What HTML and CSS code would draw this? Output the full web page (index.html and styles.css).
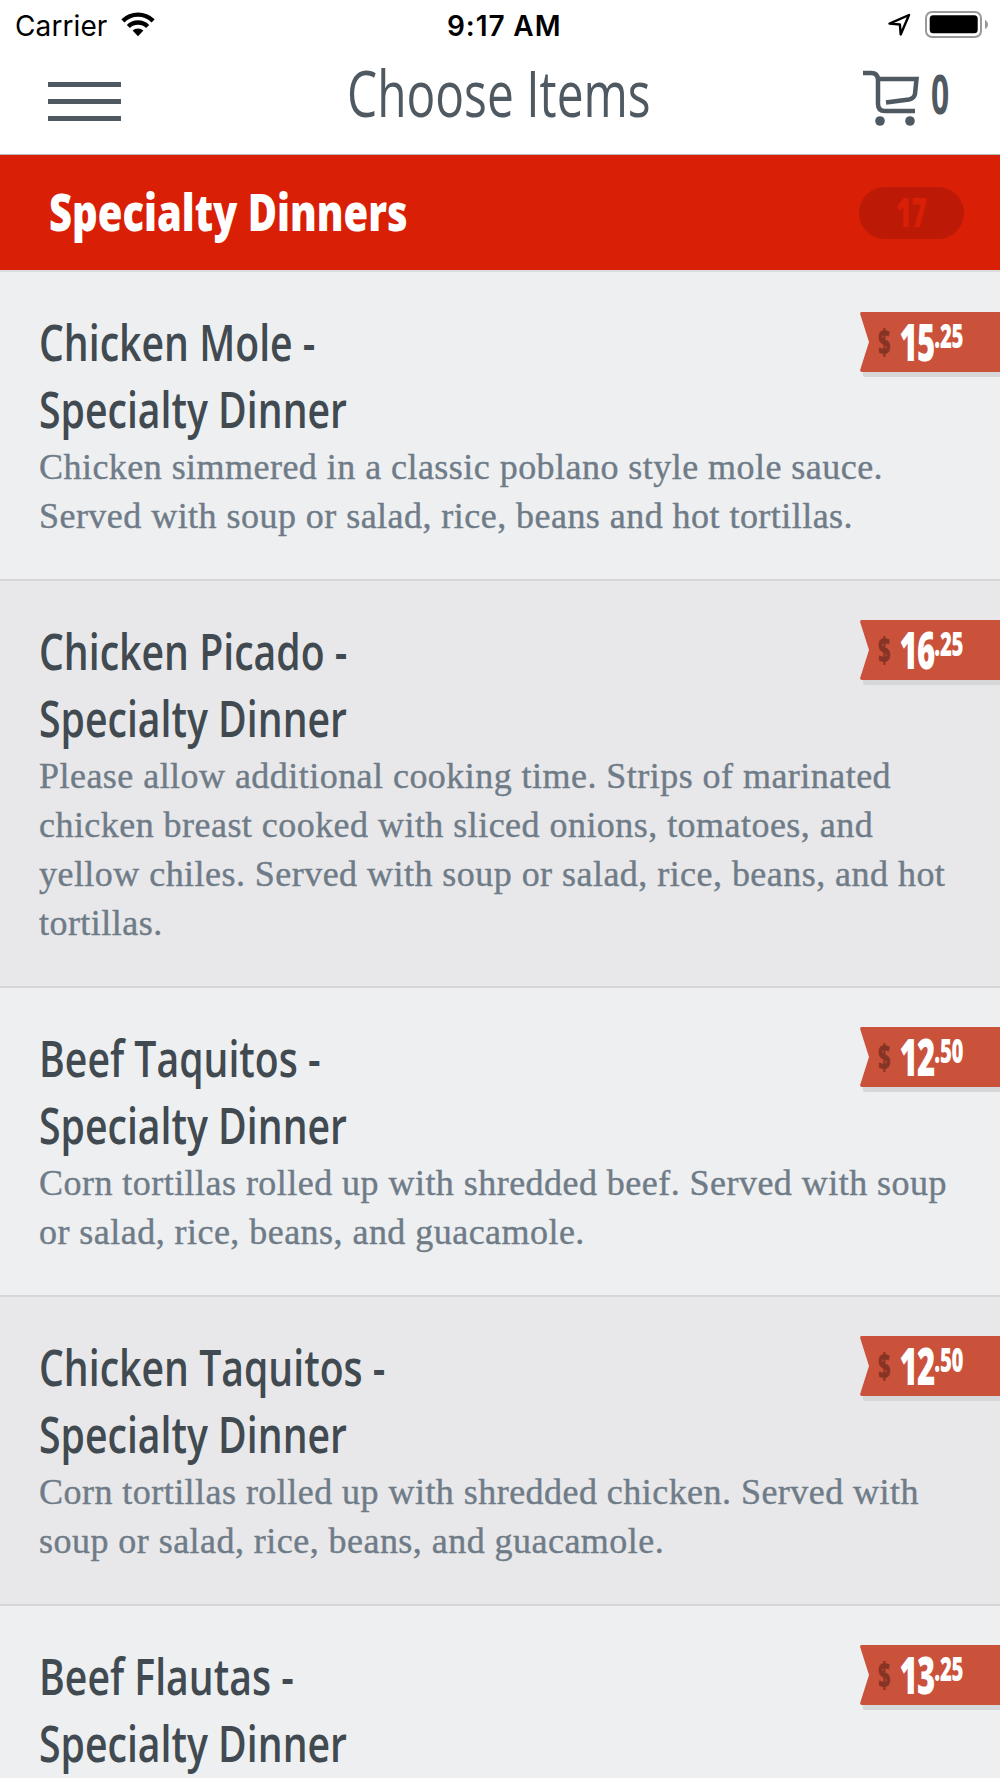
FILE: index.html
```html
<!DOCTYPE html>
<html lang="en">
<head>
    <meta charset="UTF-8">
    <meta name="viewport" content="width=device-width, initial-scale=1.0">
    <title>Choose Items</title>
    <link rel="stylesheet" href="styles.css">
</head>
<body>
    <div class="status-bar">
        <div class="status-left">
            <span class="carrier">Carrier</span>
            <svg class="wifi" width="34" height="25" viewBox="0 0 34 25">
                <path d="M0.3 7.3A24 24 0 0 1 33.7 7.3L30.6 10.4A19.5 19.5 0 0 0 3.4 10.4Z"/>
                <path d="M5.8 12.9A16 16 0 0 1 28.2 12.9L25.1 16A11.6 11.6 0 0 0 8.9 16Z"/>
                <path d="M11.6 18.6A7.8 7.8 0 0 1 22.4 18.6L17 24.3Z"/>
            </svg>
        </div>
        <span class="time">9:17 AM</span>
        <div class="status-right">
            <svg width="23" height="25" viewBox="0 0 23 25">
                <path d="M1.500 12.600L21 4L12.700 23.500L11.900 13.500Z" fill="none" stroke="#000" stroke-width="2.400" stroke-linejoin="round"/>
            </svg>
            <svg width="64" height="28" viewBox="0 0 64 28">
                <rect x="1" y="1" width="55" height="25" rx="6" fill="none" stroke="#999" stroke-width="2"/>
                <rect x="4.700" y="4.300" width="48" height="18" rx="3.500"/>
                <path d="M60 9Q63 10.500 63 13.500Q63 16.500 60 18Z" fill="#999"/>
            </svg>
        </div>
    </div>

    <header class="header">
        <div class="menu-icon"><i></i><i></i><i></i></div>
        <h1><span class="narrow">Choose Items</span></h1>
        <div class="cart">
            <svg width="57" height="56" viewBox="0 0 57 56">
                <g fill="none" stroke="#4f5961" stroke-width="4.500">
                    <path d="M0 3H8Q15 3 15 10V34Q15 41 22 41H52"/>
                    <path d="M15 9H53.500L52 24Q51 28.500 46 29.500L23 32.500"/>
                </g>
                <circle cx="17" cy="51" r="4.800" fill="#4f5961"/>
                <circle cx="47" cy="51" r="4.800" fill="#4f5961"/>
            </svg>
            <span class="cart-count narrow">0</span>
        </div>
    </header>

    <div class="category">
        <h2><span class="narrow">Specialty Dinners</span></h2>
        <div class="badge"><span class="narrow">17</span></div>
    </div>

    <ul class="items">
        <li class="item">
            <h3><span class="narrow">Chicken Mole -</span><br><span class="narrow">Specialty Dinner</span></h3>
            <p>Chicken simmered in a classic poblano style mole sauce.<br>Served with soup or salad, rice, beans and hot tortillas.</p>
            <div class="price">
                <svg class="tag" width="140" height="66" viewBox="0 0 140 66"><path class="tag-shadow" d="M3 60H140V65H5Q2 65 3 60Z"/><path class="tag-body" d="M2 0H140V60H2Q-.5 60 .3 57.500L9 30L.3 2.500Q-.5 0 2 0Z"/></svg>
                <span class="amount"><small>$</small><b>15</b><sup>.25</sup></span>
            </div>
        </li>
        <li class="item">
            <h3><span class="narrow">Chicken Picado -</span><br><span class="narrow">Specialty Dinner</span></h3>
            <p>Please allow additional cooking time. Strips of marinated<br>chicken breast cooked with sliced onions, tomatoes, and<br>yellow chiles. Served with soup or salad, rice, beans, and hot<br>tortillas.</p>
            <div class="price">
                <svg class="tag" width="140" height="66" viewBox="0 0 140 66"><path class="tag-shadow" d="M3 60H140V65H5Q2 65 3 60Z"/><path class="tag-body" d="M2 0H140V60H2Q-.5 60 .3 57.500L9 30L.3 2.500Q-.5 0 2 0Z"/></svg>
                <span class="amount"><small>$</small><b>16</b><sup>.25</sup></span>
            </div>
        </li>
        <li class="item">
            <h3><span class="narrow">Beef Taquitos -</span><br><span class="narrow">Specialty Dinner</span></h3>
            <p>Corn tortillas rolled up with shredded beef. Served with soup<br>or salad, rice, beans, and guacamole.</p>
            <div class="price">
                <svg class="tag" width="140" height="66" viewBox="0 0 140 66"><path class="tag-shadow" d="M3 60H140V65H5Q2 65 3 60Z"/><path class="tag-body" d="M2 0H140V60H2Q-.5 60 .3 57.500L9 30L.3 2.500Q-.5 0 2 0Z"/></svg>
                <span class="amount"><small>$</small><b>12</b><sup>.50</sup></span>
            </div>
        </li>
        <li class="item">
            <h3><span class="narrow">Chicken Taquitos -</span><br><span class="narrow">Specialty Dinner</span></h3>
            <p>Corn tortillas rolled up with shredded chicken. Served with<br>soup or salad, rice, beans, and guacamole.</p>
            <div class="price">
                <svg class="tag" width="140" height="66" viewBox="0 0 140 66"><path class="tag-shadow" d="M3 60H140V65H5Q2 65 3 60Z"/><path class="tag-body" d="M2 0H140V60H2Q-.5 60 .3 57.500L9 30L.3 2.500Q-.5 0 2 0Z"/></svg>
                <span class="amount"><small>$</small><b>12</b><sup>.50</sup></span>
            </div>
        </li>
        <li class="item">
            <h3><span class="narrow">Beef Flautas -</span><br><span class="narrow">Specialty Dinner</span></h3>
            <div class="price">
                <svg class="tag" width="140" height="66" viewBox="0 0 140 66"><path class="tag-shadow" d="M3 60H140V65H5Q2 65 3 60Z"/><path class="tag-body" d="M2 0H140V60H2Q-.5 60 .3 57.500L9 30L.3 2.500Q-.5 0 2 0Z"/></svg>
                <span class="amount"><small>$</small><b>13</b><sup>.25</sup></span>
            </div>
        </li>
    </ul>
</body>
</html>
```
FILE: styles.css
```css
* {
    box-sizing: border-box;
}
body {
    margin: 0;
    width: 1000px;
    height: 1778px;
    overflow: hidden;
    background-color: #fff;
    font-family: "Open Sans", sans-serif;
}
h1, h2, h3, p, ul {
    margin: 0;
    padding: 0;
    font-weight: normal;
}
.narrow {
    display: inline-block;
    white-space: nowrap;
    transform-origin: left center;
}
.status-bar {
    height: 50px;
    display: grid;
    grid-template-columns: 432px 1fr auto;
    padding: 0 11px 0 15px;
    font-family: Inter, sans-serif;
    font-size: 28px;
    line-height: 52px;
    color: #000;
}
.status-left {
    display: flex;
    gap: 14px;
}
.carrier {
    letter-spacing: 0.1px;
}
.wifi {
    margin-top: 12px;
}
.time {
    font-weight: 600;
    letter-spacing: 0.9px;
}
.status-right {
    display: flex;
    justify-content: flex-end;
    gap: 14px;
}
.status-right svg {
    margin-top: 11px;
}
.header {
    height: 105px;
    display: flex;
    align-items: flex-start;
    padding-left: 48px;
    border-bottom: 1px solid #b9b9b9;
    color: #4f5961;
}
.menu-icon {
    width: 73px;
    margin-top: 32px;
    display: flex;
    flex-direction: column;
    gap: 12px;
}
.menu-icon i {
    height: 5px;
    background-color: #4f5961;
}
.header h1 {
    width: 516px;
    margin-left: 226px;
    margin-top: 5px;
    font-size: 64px;
    line-height: 76px;
    font-weight: 400;
}
.header h1 .narrow {
    transform: scaleX(0.748);
}
.cart {
    display: flex;
    margin-top: 20px;
}
.cart-count {
    margin-left: 11px;
    margin-top: -1px;
    font-size: 53px;
    font-weight: 700;
    line-height: 50px;
    transform: scaleX(0.6);
}
.category {
    height: 117px;
    display: flex;
    align-items: center;
    justify-content: space-between;
    padding: 0 36px 0 49px;
    background-color: #d91f06;
    border-bottom: 2px solid #dcdcde;
}
.category h2 {
    font-size: 51px;
    line-height: 60px;
    font-weight: 800;
    color: #fff;
    margin-top: -3px;
}
.category h2 .narrow {
    transform: scaleX(0.783);
}
.badge {
    width: 105px;
    height: 52px;
    border-radius: 26px;
    background-color: #bc1a06;
    color: #d91f06;
    font-size: 40px;
    font-weight: 800;
    line-height: 50px;
    text-align: center;
}
.badge .narrow {
    transform: scaleX(0.66);
    transform-origin: center;
}
.items {
    list-style: none;
}
.item {
    position: relative;
    padding: 36px 0 37.9px 39px;
    background-color: #eeeff1;
    border-bottom: 2px solid #d6d6d8;
}
.item:nth-child(even) {
    background-color: #e8e8ea;
}
.item h3 {
    margin-bottom: 1px;
    font-size: 51px;
    line-height: 67px;
    font-weight: 600;
    color: #414a50;
}
.item h3 .narrow {
    transform: scaleX(0.768);
}
.item p {
    font-family: "Liberation Serif", serif;
    font-size: 36px;
    line-height: 49px;
    letter-spacing: 0.46px;
    white-space: nowrap;
    color: #6f7c88;
    -webkit-text-stroke: 0.4px #6f7c88;
}
/* ribbon sits over the right edge of the row */
.price {
    position: absolute;
    top: 39.5px;
    right: 0;
    width: 140px;
    height: 66px;
}
.tag {
    display: block;
}
.tag-body {
    fill: #ca513a;
}
.tag-shadow {
    fill: #d5d7d9;
}
.amount {
    position: absolute;
    left: 18px;
    top: 0;
    height: 60px;
    display: flex;
    line-height: 59px;
    white-space: nowrap;
    color: #fff;
    transform: scaleX(0.6);
    transform-origin: left center;
}
.amount small {
    width: 36px;
    font-size: 36px;
    font-weight: 800;
    color: #873425;
}
.amount b {
    font-size: 52px;
    font-weight: 800;
    line-height: 57px;
    letter-spacing: -1.5px;
}
.amount sup {
    font-size: 34px;
    font-weight: 800;
    line-height: 46px;
    letter-spacing: -0.5px;
}
```
